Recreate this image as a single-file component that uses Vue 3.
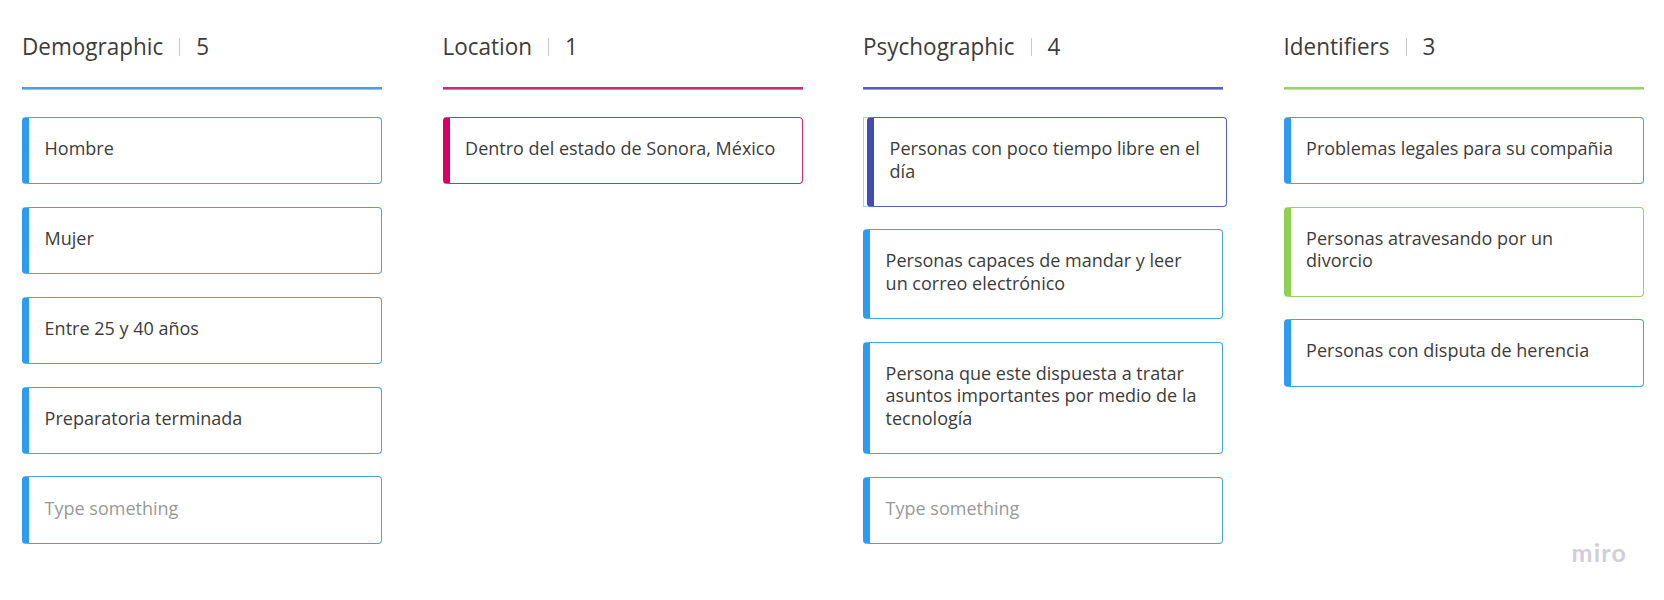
<script setup>
const columns = [
  {
    title: 'Demographic', count: 5, tone: 'blue',
    cards: [
      { text: 'Hombre', tone: 'blue' },
      { text: 'Mujer', tone: 'blue' },
      { text: 'Entre 25 y 40 años', tone: 'blue' },
      { text: 'Preparatoria terminada', tone: 'blue' },
      { text: 'Type something', tone: 'blue', empty: true },
    ],
  },
  {
    title: 'Location', count: 1, tone: 'pink',
    cards: [{ text: 'Dentro del estado de Sonora, México', tone: 'pink' }],
  },
  {
    title: 'Psychographic', count: 4, tone: 'indigo',
    cards: [
      { text: 'Personas con poco tiempo libre en el\ndía', tone: 'indigo', shifted: true },
      { text: 'Personas capaces de mandar y leer\nun correo electrónico', tone: 'blue' },
      { text: 'Persona que este dispuesta a tratar\nasuntos importantes por medio de la\ntecnología', tone: 'blue' },
      { text: 'Type something', tone: 'blue', empty: true },
    ],
  },
  {
    title: 'Identifiers', count: 3, tone: 'green',
    cards: [
      { text: 'Problemas legales para su compañia', tone: 'blue' },
      { text: 'Personas atravesando por un\ndivorcio', tone: 'green' },
      { text: 'Personas con disputa de herencia', tone: 'blue' },
    ],
  },
]
</script>

<template>
  <main class="board">
    <section v-for="col in columns" :key="col.title" class="column" :class="col.tone">
      <header class="head">
        <h2 class="title">{{ col.title }}</h2>
        <span class="divider"></span>
        <span class="count">{{ col.count }}</span>
      </header>
      <div class="rule"></div>
      <div class="cards">
        <div v-for="(card, i) in col.cards" :key="i" class="slot" :class="{ shifted: card.shifted }">
          <article class="card" :class="[card.tone, { empty: card.empty }]">{{ card.text }}</article>
        </div>
      </div>
    </section>
    <div class="brand">miro</div>
  </main>
</template>

<style>
body { background: #fff; }
</style>

<style scoped>
.board {
  position: relative;
  box-sizing: border-box;
  width: 1664px;
  height: 600px;
  padding: 31px 0 0 22px;
  display: grid;
  grid-template-columns: repeat(4, 360px);
  column-gap: 60.5px;
  align-items: start;
  overflow: hidden;
  background: #fff;
  font-family: "Open Sans", "Noto Sans", sans-serif;
  color: #3c3c3c;
}
.blue { --tone: #2d9bf0; --edge: #4aa0e2; }
.pink { --tone: #da0063; --edge: #cb2a74; }
.indigo { --tone: #414bb2; --edge: #5560ba; }
.green { --tone: #8fd14f; --edge: #98d268; }
.head {
  display: flex;
  align-items: center;
  height: 32px;
  font-size: 22.5px;
  line-height: 32px;
}
.title { margin: 0; font: inherit; }
.title, .count { transform: scaleY(1.07); transform-origin: 0 24px; }
.divider { width: 1px; height: 18px; margin: 0 16px; background: #c8c8c8; }
.rule {
  height: 2px;
  margin-top: 24px;
  background: var(--edge);
  border-bottom: 1px solid color-mix(in srgb, var(--tone) 55%, white);
}
.cards {
  display: flex;
  flex-direction: column;
  gap: 22.4px;
  margin-top: 26.9px;
}
.card {
  box-sizing: border-box;
  padding: 19.2px 10px 23.8px 15.6px;
  border: 1px solid var(--edge);
  border-left: 7px solid var(--tone);
  border-radius: 4px;
  background: #fff;
  font-size: 18px;
  line-height: 22.5px;
  white-space: pre;
}
.card.empty { color: #999; }
.slot.shifted {
  width: 364px;
  box-sizing: border-box;
  padding-left: 4px;
  background: linear-gradient(#a9d4f8, #a9d4f8) 0 0 / 1px 100% no-repeat,
    linear-gradient(#a9d4f8, #a9d4f8) 0 0 / 10px 1px no-repeat,
    linear-gradient(#a9d4f8, #a9d4f8) 0 100% / 10px 1px no-repeat;
}
.brand {
  position: absolute;
  right: 37px;
  bottom: 33px;
  font-family: Lato, sans-serif;
  font-size: 25px;
  font-weight: 700;
  line-height: 30px;
  letter-spacing: 1.2px;
  color: #d0cfd9;
}
</style>
